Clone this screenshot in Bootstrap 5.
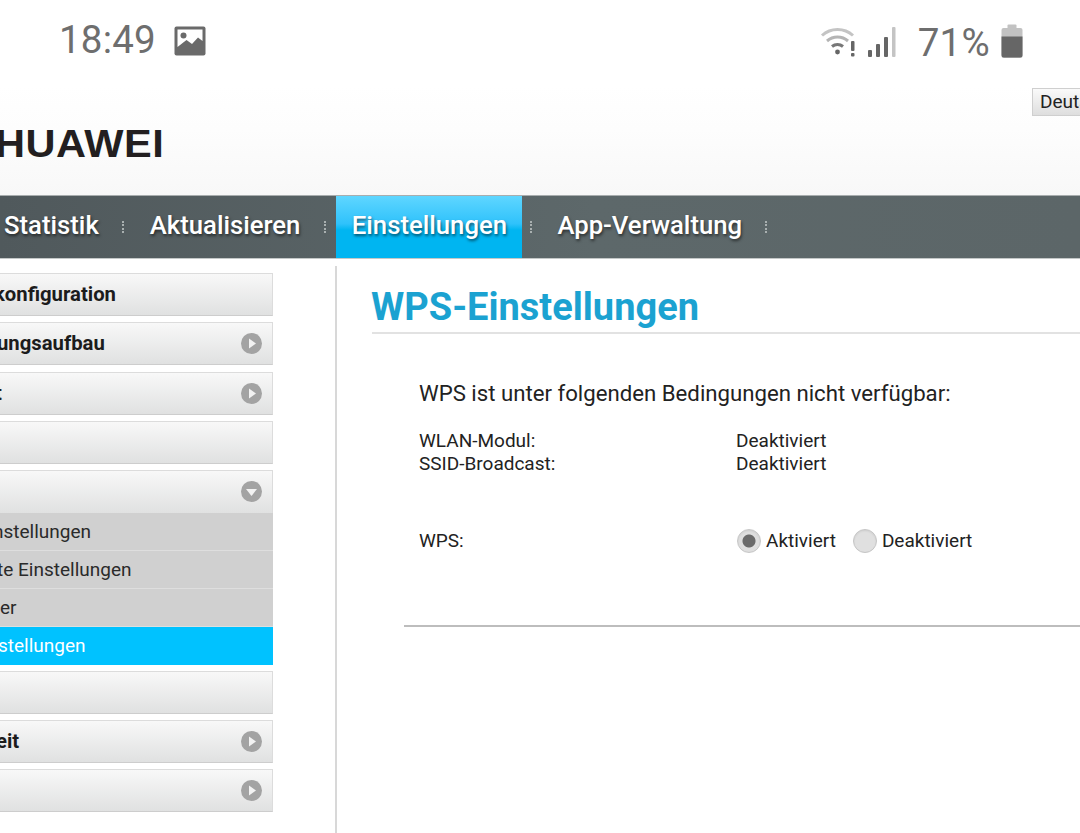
<!DOCTYPE html>
<html lang="de">
<head>
<meta charset="utf-8">
<title>WPS-Einstellungen</title>
<link href="https://cdn.jsdelivr.net/npm/bootstrap@5.3.0/dist/css/bootstrap.min.css" rel="stylesheet">
<style>
html,body{height:833px;overflow:hidden;background:#fff}
body{font-family:Roboto,"Liberation Sans",sans-serif;color:#222;width:1080px}
.status-strip{height:85px;padding:0 57px 4px 59px;color:#6e6e6e}
.status-time{font-size:38.5px;line-height:1;letter-spacing:.2px;margin-right:18px;font-weight:400}
.status-pct{font-size:38.5px;line-height:1;margin:5px 11px 0 22px;letter-spacing:.3px;font-weight:400}
.wifi-ic{margin-right:11px}
.brand-strip{height:110px;background:linear-gradient(#fff 0,#fdfdfd 40%,#f8f8f8 100%);overflow:hidden}
.lang-btn{height:28px;width:60px;margin:3px -12px 0 0;background:linear-gradient(#fafafa,#dedede);border:1px solid #cfcfcf;font-size:19px;line-height:25px;padding-left:7px;color:#222;overflow:hidden;white-space:nowrap}
.lang-row{height:31px}
.logo-word{font-family:"Liberation Sans",sans-serif;font-weight:700;font-size:39px;line-height:1;color:#231f20;margin:8px 0 0 -5px;letter-spacing:.5px;transform:scaleX(1.065);transform-origin:left}
.top-menu{height:64px;background:#596466;background-image:linear-gradient(90deg,#50595c,#5d686a 55%,#5c6668);border-top:1px solid #a8adae;border-bottom:1px solid #c4c8c8}
.top-item{font-size:25.7px;font-weight:500;color:#fff;text-shadow:1px 2px 3px rgba(0,0,0,.55);height:100%;line-height:59px;white-space:nowrap}
.top-sep{width:2px;height:12px;border-left:2px dotted #a9b0b0;flex:none}
.sep-a{margin:0 26px 0 23px}
.sep-b{margin:0 10px 0 24px}
.sep-c{margin:0 25px 0 8px}
.top-active{width:186px;background:linear-gradient(#5fd6ff 0,#2fc2fb 45%,#00b5f1 55%,#00b5f1 100%);text-align:center;flex:none}
.page-main{height:575px}
.side-col{width:273px;padding-top:14px;flex:none}
.side-btn{height:43px;margin-bottom:6px;background:linear-gradient(#f8f8f8,#e0e1e1);border:1px solid #dcdcdc;border-bottom-color:#cdcdcd;border-left:0;font-size:20.3px;font-weight:700;color:#1c1c1c;padding:0 10px 1px 0;white-space:nowrap;overflow:hidden}
.side-btn.is-open{margin-bottom:0;border-bottom:0}
.side-second{margin-bottom:7px}
.clip-k{margin-left:-6px}
.clip-t{margin-left:-5px}
.clip-u{margin-left:-3px}
.clip-i{margin-left:-4px}
.side-sub{height:38px;background:#d0d0d0;border-bottom:1px solid #dedede;font-size:19px;color:#2a2a2a;white-space:nowrap;overflow:hidden;padding-top:2px}
.side-sub.sub-on{background:#00c2ff;color:#fff;border-bottom:0;height:38px;margin-bottom:6px;padding-top:0}
.clip-n{margin-left:-7px}
.clip-s{margin-left:-2px}
.clip-e{margin-left:-3px}
.divide-line{width:2px;background:#d8d8d8;margin:7px 35px 0 62px;flex:none}
.content-col{flex:1 1 auto;padding-top:25px}
.page-title{font-size:38px;font-weight:700;color:#1ba2d1;line-height:46px;padding-bottom:3px;border-bottom:2px solid #e2e2e2;margin:0;height:50px;text-indent:-1px}
.content-body{padding:46px 0 0 47px}
.lead-line{font-size:22.2px;line-height:26px;color:#222;margin-bottom:23px}
.info-row{font-size:19px;line-height:23px;color:#222}
.info-label{width:318px;flex:none}
.info-val{margin-left:-1px}
.wps-row{margin-top:52px;height:28px;font-size:19px;color:#222}
.wps-radio.form-check-input{width:24px;height:24px;margin:0 5px 0 0;background:#e0e0e0;border:1px solid #c6c6c6;box-shadow:inset 0 1px 2px rgba(0,0,0,.08)}
.wps-radio.form-check-input:checked{background:radial-gradient(circle,#6a6a6a 0,#6a6a6a 6px,#dedede 7px);border-color:#c6c6c6}
.radio-gap{margin-right:17px}
.end-rule{margin:70px 0 0 -15px;border-top:2px solid #bdbdbd;opacity:1}
</style>
</head>
<body>
<div class="status-strip d-flex align-items-center">
  <span class="status-time">18:49</span>
  <svg width="32" height="30" viewBox="0 0 32 30"><rect x="0.5" y="0.5" width="31" height="29" rx="2" fill="#6a6a6a"/><path d="M3.5 3.5H28.5V15L24 11.5 18 18 12.5 14 3.5 21Z" fill="#fff"/><circle cx="9.5" cy="9.5" r="3" fill="#6a6a6a"/></svg>
  <span class="flex-grow-1"></span>
  <svg class="wifi-ic" width="36" height="32" viewBox="0 0 36 32"><path d="M2 10.5A23 23 0 0 1 33 10.5" fill="none" stroke="#c4c4c4" stroke-width="3"/><path d="M7 16A16 16 0 0 1 28 16" fill="none" stroke="#b4b4b4" stroke-width="3"/><path d="M12 21.5A8.5 8.5 0 0 1 23 21.5" fill="none" stroke="#777" stroke-width="3"/><circle cx="17.5" cy="27" r="2.4" fill="#666"/><rect x="31" y="16" width="3.500" height="10" rx="1" fill="#666"/><rect x="31" y="28" width="3.500" height="3.500" rx="1" fill="#666"/></svg>
  <svg width="29" height="32" viewBox="0 0 29 32"><rect x="1" y="25" width="4" height="7" rx="1" fill="#666"/><rect x="9" y="19" width="4" height="13" rx="1" fill="#666"/><rect x="17" y="12" width="4" height="20" rx="1" fill="#666"/><rect x="25" y="2" width="3.5" height="30" rx="1" fill="#c4c4c4"/></svg>
  <span class="status-pct">71%</span>
  <svg width="22" height="34" viewBox="0 0 22 34"><rect x="6.500" y="0.500" width="9" height="5" rx="1" fill="#c2c2c2"/><rect x="0.500" y="4" width="21" height="30" rx="2" fill="#c2c2c2"/><path d="M0.500 12.500H21.500V31a2.500 2.500 0 0 1-2.500 2.500H3A2.500 2.500 0 0 1 0.500 31Z" fill="#666"/></svg>
</div>
<div class="brand-strip">
  <div class="lang-row d-flex justify-content-end"><div class="lang-btn">Deutsch</div></div>
  <div class="logo-word">HUAWEI</div>
</div>
<nav class="top-menu d-flex align-items-center">
  <span class="top-item ms-1">Statistik</span><span class="top-sep sep-a"></span>
  <span class="top-item">Aktualisieren</span><span class="top-sep sep-b"></span>
  <span class="top-item top-active">Einstellungen</span><span class="top-sep sep-c"></span>
  <span class="top-item">App-Verwaltung</span><span class="top-sep sep-a"></span>
</nav>
<div class="page-main d-flex">
  <aside class="side-col">
    <div class="side-btn d-flex align-items-center"><span class="clip-k">konfiguration</span></div>
    <div class="side-btn side-second d-flex align-items-center justify-content-between"><span class="clip-u">ungsaufbau</span><svg width="21" height="21" viewBox="0 0 21 21"><circle cx="10.500" cy="10.500" r="10.500" fill="#a3a3a3"/><path d="M8 5.500L15 10.500 8 15.500Z" fill="#f2f2f2"/></svg></div>
    <div class="side-btn d-flex align-items-center justify-content-between"><span class="clip-t">t</span><svg width="21" height="21" viewBox="0 0 21 21"><circle cx="10.500" cy="10.500" r="10.500" fill="#a3a3a3"/><path d="M8 5.500L15 10.500 8 15.500Z" fill="#f2f2f2"/></svg></div>
    <div class="side-btn"></div>
    <div class="side-btn is-open d-flex align-items-center justify-content-end"><svg width="21" height="21" viewBox="0 0 21 21"><circle cx="10.500" cy="10.500" r="10.500" fill="#a3a3a3"/><path d="M5 8L16 8 10.500 15Z" fill="#f2f2f2"/></svg></div>
    <div class="side-sub d-flex align-items-center"><span class="clip-n">nstellungen</span></div>
    <div class="side-sub d-flex align-items-center"><span class="clip-e">te Einstellungen</span></div>
    <div class="side-sub d-flex align-items-center"><span>er</span></div>
    <div class="side-sub sub-on d-flex align-items-center"><span class="clip-s">stellungen</span></div>
    <div class="side-btn"></div>
    <div class="side-btn d-flex align-items-center justify-content-between"><span class="clip-i">eit</span><svg width="21" height="21" viewBox="0 0 21 21"><circle cx="10.500" cy="10.500" r="10.500" fill="#a3a3a3"/><path d="M8 5.500L15 10.500 8 15.500Z" fill="#f2f2f2"/></svg></div>
    <div class="side-btn d-flex align-items-center justify-content-end"><svg width="21" height="21" viewBox="0 0 21 21"><circle cx="10.500" cy="10.500" r="10.500" fill="#a3a3a3"/><path d="M8 5.500L15 10.500 8 15.500Z" fill="#f2f2f2"/></svg></div>
  </aside>
  <div class="divide-line"></div>
  <main class="content-col">
    <h1 class="page-title">WPS-Einstellungen</h1>
    <div class="content-body">
      <p class="lead-line">WPS ist unter folgenden Bedingungen nicht verfügbar:</p>
      <div class="info-row d-flex"><span class="info-label">WLAN-Modul:</span><span class="info-val">Deaktiviert</span></div>
      <div class="info-row d-flex"><span class="info-label">SSID-Broadcast:</span><span class="info-val">Deaktiviert</span></div>
      <div class="wps-row d-flex align-items-center">
        <span class="info-label">WPS:</span>
        <input class="form-check-input wps-radio" type="radio" name="wps" checked aria-label="Aktiviert"><span class="radio-gap">Aktiviert</span>
        <input class="form-check-input wps-radio" type="radio" name="wps" aria-label="Deaktiviert"><span>Deaktiviert</span>
      </div>
      <hr class="end-rule">
    </div>
  </main>
</div>
<script src="https://cdn.jsdelivr.net/npm/bootstrap@5.3.0/dist/js/bootstrap.bundle.min.js"></script>
</body>
</html>
